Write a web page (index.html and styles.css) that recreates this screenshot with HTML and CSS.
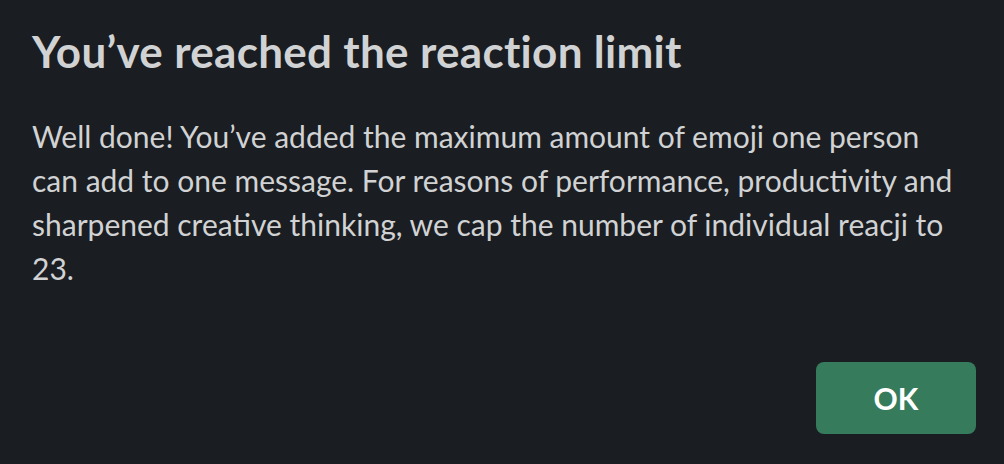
FILE: index.html
```html
<!DOCTYPE html>
<html lang="en">
<head>
<meta charset="utf-8">
<title>Reaction limit</title>
<link rel="stylesheet" href="styles.css">
</head>
<body>
<div class="modal">
  <h1 class="modal-title">You’ve reached the reaction limit</h1>
  <p class="modal-body">Well done! You’ve added the maximum amount of emoji one person can add to one message. For reasons of performance, productivity and sharpened creative thinking, we cap the number of individual reacji to 23.</p>
  <div class="modal-footer">
    <button class="btn-ok" type="button">OK</button>
  </div>
</div>
</body>
</html>
```
FILE: styles.css
```css
html, body {
  margin: 0;
  padding: 0;
  background: #1a1d21;
}
body {
  width: 1004px;
  height: 464px;
  overflow: hidden;
  font-family: Lato, "Open Sans", sans-serif;
  color: #d1d2d3;
}
.modal {
  padding: 25px 28px 30px 32px;
}
.modal-title {
  margin: 0 0 36px;
  font-size: 44px;
  font-weight: 700;
  line-height: 52.8px;
  letter-spacing: 0.3px;
  color: #d1d2d3;
}
.modal-body {
  margin: 0 16px 0 0;
  font-size: 30px;
  line-height: 44px;
}
.modal-footer {
  display: flex;
  justify-content: flex-end;
  margin-top: 72px;
}
.btn-ok {
  width: 160px;
  height: 72px;
  border: none;
  border-radius: 8px;
  background: #367b5c;
  color: #ffffff;
  font-family: Lato, "Open Sans", sans-serif;
  font-size: 30px;
  font-weight: 700;
  display: flex;
  align-items: center;
  justify-content: center;
  padding: 0;
}
```
